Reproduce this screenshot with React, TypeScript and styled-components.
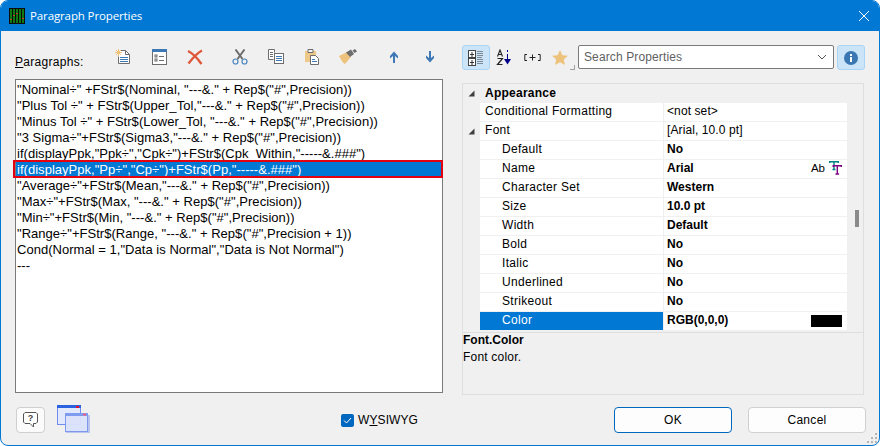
import styled, { createGlobalStyle } from "styled-components";

const GlobalStyle = createGlobalStyle`
  html, body {
    margin: 0;
    padding: 0;
    background: #fff;
  }
  body {
    font-family: "Liberation Sans", Arial, sans-serif;
    font-size: 12px;
    color: #000;
  }
`;

const Window = styled.div`
  width: 880px;
  height: 446px;
  box-sizing: border-box;
  display: flex;
  flex-direction: column;
  background: #f0f0f0;
  border: 1px solid #0078d4;
  border-radius: 8px;
  overflow: hidden;
  position: relative;
`;

const TitleBar = styled.div`
  height: 30px;
  flex: none;
  display: flex;
  align-items: center;
  padding: 0 5px 0 8px;
  gap: 5px;
  background: #0078d4;
  color: #fff;
  font-family: "Open Sans", sans-serif;
  font-size: 11.5px;
  letter-spacing: -0.12px;
`;

const Title = styled.span`
  flex: 1;
  padding-bottom: 2px;
`;

const CloseButton = styled.span`
  width: 20px;
  height: 20px;
  display: flex;
  align-items: center;
  justify-content: center;
`;

const Body = styled.div`
  flex: 1;
  display: flex;
  flex-direction: column;
  padding: 14px 13px 0 14px;
`;

const Columns = styled.div`
  display: flex;
  gap: 19px;
`;

const LeftColumn = styled.div`
  width: 428px;
  flex: none;
  display: flex;
  flex-direction: column;
`;

const RightColumn = styled.div`
  width: 403px;
  flex: none;
  display: flex;
  flex-direction: column;
`;

const ListHeader = styled.div`
  height: 34px;
  display: flex;
  align-items: flex-start;
`;

const ListLabel = styled.label`
  width: 90px;
  flex: none;
  padding-top: 10px;
  font-size: 12px;
  letter-spacing: 0.3px;
`;

const ToolIcon = styled.span<{ $gap?: number }>`
  width: 36px;
  height: 18px;
  flex: none;
  margin-left: ${(p) => p.$gap ?? 0}px;
  margin-top: 4px;
  display: flex;
  justify-content: center;
`;

const ParagraphList = styled.div`
  height: 314px;
  box-sizing: border-box;
  border: 1px solid #7a7a7a;
  background: #fff;
  padding-top: 1px;
`;

const ParagraphRow = styled.div<{ $selected?: boolean }>`
  height: 16px;
  line-height: 17px;
  padding-left: 1px;
  font-size: 13px;
  letter-spacing: 0.03px;
  white-space: pre;
  position: relative;
  overflow: ${(p) => (p.$selected ? "visible" : "hidden")};
  background: ${(p) => (p.$selected ? "#0078d4" : "transparent")};
  color: ${(p) => (p.$selected ? "#fff" : "#000")};

  ${(p) =>
    p.$selected &&
    `&::after {
      content: "";
      position: absolute;
      inset: -1px -1px -1px -3px;
      border: 2px solid #e3000f;
    }`}
`;

const SearchBar = styled.div`
  height: 25px;
  display: flex;
  align-items: flex-start;
  margin-bottom: 13px;
`;

const ToggleButton = styled.span<{ $on?: boolean }>`
  width: 28px;
  height: 25px;
  box-sizing: border-box;
  display: flex;
  align-items: center;
  justify-content: center;
  border-radius: 3px;
  border: 1px solid ${(p) => (p.$on ? "#a8d4f5" : "transparent")};
  background: ${(p) => (p.$on ? "#cce4f7" : "transparent")};
`;

const StarButton = styled(ToggleButton)`
  position: relative;

  &::after {
    content: "";
    position: absolute;
    right: -2px;
    bottom: -1px;
    width: 4px;
    height: 4px;
    border-right: 1px solid #a0a0a0;
    border-bottom: 1px solid #a0a0a0;
  }
`;

const SearchBox = styled.div`
  width: 256px;
  height: 24px;
  box-sizing: border-box;
  margin: 0 3px 0 4px;
  padding: 0 6px 1px 5px;
  display: flex;
  align-items: center;
  justify-content: space-between;
  background: #fff;
  border: 1px solid #7a7a7a;
  border-radius: 2px;
  color: #5f5f5f;
  letter-spacing: 0.12px;
`;

const PropertyGrid = styled.div`
  height: 312px;
  margin-right: 1px;
  box-sizing: border-box;
  display: flex;
  flex-direction: column;
  border: 1px solid #dedede;
  position: relative;
`;

const Rows = styled.div`
  height: 248px;
  flex: none;
  border-bottom: 1px solid #dedede;
  padding-right: 16px;
`;

const Row = styled.div<{ $category?: boolean }>`
  height: 19px;
  box-sizing: border-box;
  display: grid;
  grid-template-columns: 17px 184px 1fr;
  border-bottom: 1px solid ${(p) => (p.$category ? "transparent" : "#f0f0f0")};
`;

const Gutter = styled.span`
  display: flex;
  align-items: center;
  padding-left: 5px;
`;

const CategoryName = styled.span`
  grid-column: 2 / 4;
  padding-left: 5px;
  line-height: 18px;
  font-weight: bold;
  letter-spacing: 0.25px;
`;

const PropName = styled.span<{ $indent?: boolean; $selected?: boolean }>`
  padding-left: ${(p) => (p.$indent ? 22 : 5)}px;
  margin-right: 1px;
  line-height: 16px;
  background: ${(p) => (p.$selected ? "#0078d4" : "#fff")};
  color: ${(p) => (p.$selected ? "#fff" : "#000")};
  letter-spacing: 0.3px;
`;

const PropValue = styled.span<{ $bold?: boolean }>`
  padding: 0 5px 2px 3px;
  display: flex;
  align-items: center;
  justify-content: space-between;
  background: #fff;
  font-weight: ${(p) => (p.$bold ? "bold" : "normal")};
  letter-spacing: ${(p) => (p.$bold ? "0" : "0.1px")};
`;

const Swatch = styled.span`
  width: 31px;
  height: 12px;
  margin-top: 2px;
  background: #000;
`;

const FontBadges = styled.span`
  display: flex;
  align-items: center;
  gap: 4px;
`;

const FontSample = styled.span`
  font-weight: normal;
  font-size: 11.5px;
`;

const ScrollThumb = styled.span`
  position: absolute;
  left: 392px;
  top: 126px;
  width: 4px;
  height: 17px;
  background: #8a8a8a;
`;

const Description = styled.div`
  flex: 1;
`;

const DescriptionTitle = styled.div`
  height: 17px;
  line-height: 14px;
  font-weight: bold;
`;

const DescriptionText = styled.div`
  line-height: 14px;
  letter-spacing: 0.2px;
`;

const Footer = styled.div`
  display: flex;
  align-items: flex-start;
  padding-top: 12px;
`;

const HelpButton = styled.span`
  width: 29px;
  height: 26px;
  box-sizing: border-box;
  margin-left: 1px;
  display: flex;
  align-items: center;
  justify-content: center;
  background: #fbfbfb;
  border: 1px solid #cfcfcf;
  border-radius: 4px;
`;

const LayoutIcon = styled.span`
  width: 34px;
  height: 28px;
  margin: -2px 0 0 12px;
`;

const CheckGroup = styled.label`
  display: flex;
  align-items: center;
  gap: 4px;
  height: 26px;
  margin-left: 250px;
  letter-spacing: 0.1px;
`;

const CheckBox = styled.span`
  width: 13px;
  height: 13px;
  display: flex;
  align-items: center;
  justify-content: center;
  background: #0067c0;
  border-radius: 2px;
`;

const DialogButton = styled.button<{ $primary?: boolean }>`
  width: 118px;
  height: 26px;
  padding: 0;
  margin-left: ${(p) => (p.$primary ? "auto" : "16px")};
  background: #fdfdfd;
  border: 1px solid ${(p) => (p.$primary ? "#0067c0" : "#d0d0d0")};
  border-radius: 4px;
  font-family: "Liberation Sans", Arial, sans-serif;
  font-size: 12px;
  color: #000;
  letter-spacing: 0.3px;
`;

const ResizeGrip = styled.span`
  position: absolute;
  right: 1px;
  bottom: 1px;
  width: 11px;
  height: 11px;
`;

const paragraphs = [
  `"Nominal÷" +FStr$(Nominal, "---&." + Rep$("#",Precision))`,
  `"Plus Tol ÷" + FStr$(Upper_Tol,"---&." + Rep$("#",Precision))`,
  `"Minus Tol ÷" + FStr$(Lower_Tol, "---&." + Rep$("#",Precision))`,
  `"3 Sigma÷"+FStr$(Sigma3,"---&." + Rep$("#",Precision))`,
  `if(displayPpk,"Ppk÷","Cpk÷")+FStr$(Cpk_Within,"-----&.###")`,
  `if(displayPpk,"Pp÷","Cp÷")+FStr$(Pp,"-----&.###")`,
  `"Average÷"+FStr$(Mean,"---&." + Rep$("#",Precision))`,
  `"Max÷"+FStr$(Max, "---&." + Rep$("#",Precision))`,
  `"Min÷"+FStr$(Min, "---&." + Rep$("#",Precision))`,
  `"Range÷"+FStr$(Range, "---&." + Rep$("#",Precision + 1))`,
  `Cond(Normal = 1,"Data is Normal","Data is Not Normal")`,
  `---`,
];

const fontProps = [
  ["Default", "No"],
  ["Name", "Arial"],
  ["Character Set", "Western"],
  ["Size", "10.0 pt"],
  ["Width", "Default"],
  ["Bold", "No"],
  ["Italic", "No"],
  ["Underlined", "No"],
  ["Strikeout", "No"],
];

function Triangle() {
  return (
    <svg width="7" height="7" viewBox="0 0 7 7">
      <path d="M6.5 0.5V6.5H0.5Z" fill="#404040" />
    </svg>
  );
}

function AppIcon() {
  return (
    <svg width="16" height="16" viewBox="0 0 16 16">
      <rect width="16" height="16" fill="#0b0b0b" />
      <path d="M1 1h2v14H1zM4 1h2v14H4zM7 1h2v14H7zM10 1h2v14h-2zM13 1h2v14h-2z" fill="#0c7a12" />
      <path d="M4 7h2v1H4zM7 5h2v1H7zM1 11h2v1H1zM13 10h2v1h-2z" fill="#c8401c" />
    </svg>
  );
}

function NewIcon() {
  return (
    <svg width="16" height="16" viewBox="0 0 16 16">
      <path d="M5.5 1.5h5l4 4v9h-11v-7" fill="#fff" stroke="#6d6d6d" />
      <path d="M10.5 1.5v4h4" fill="none" stroke="#6d6d6d" />
      <path d="M5 8h8v1H5zM5 10h8v1H5zM5 12h8v1H5z" fill="#3d78b4" />
      <path d="M3.5 0v7M0 3.5h7M1 1l5 5M6 1l-5 5" stroke="#eec27a" strokeWidth="1" />
    </svg>
  );
}

function FormIcon() {
  return (
    <svg width="15" height="16" viewBox="0 0 15 16">
      <rect x="0.5" y="0.5" width="14" height="15" fill="#fff" stroke="#6d6d6d" />
      <rect x="0" y="0" width="15" height="3" fill="#3d78b4" />
      <rect x="3" y="6" width="2" height="2" fill="none" stroke="#6d6d6d" />
      <rect x="3" y="10" width="2" height="2" fill="none" stroke="#6d6d6d" />
      <path d="M7 7h5v1H7zM7 11h5v1H7z" fill="#6d6d6d" />
    </svg>
  );
}

function DeleteIcon() {
  return (
    <svg width="16" height="16" viewBox="0 0 16 16">
      <path d="M1 2C5 4 11 10 14.5 15M15 1.5C10 4 5 10 1.5 14.5" fill="none" stroke="#e0583a" strokeWidth="2.4" />
    </svg>
  );
}

function CutIcon() {
  return (
    <svg width="16" height="16" viewBox="0 0 16 16">
      <path d="M3.5 0.5L10.5 10M12.5 0.5L5.5 10" fill="none" stroke="#6d6d6d" strokeWidth="2" />
      <circle cx="3.5" cy="12.5" r="2.5" fill="none" stroke="#4a84c0" strokeWidth="1.2" />
      <circle cx="12.5" cy="12.5" r="2.5" fill="none" stroke="#4a84c0" strokeWidth="1.2" />
    </svg>
  );
}

function CopyIcon() {
  return (
    <svg width="16" height="15" viewBox="0 0 16 15">
      <path d="M5.5 10.5h-5v-10h6v3" fill="#fff" stroke="#6d6d6d" />
      <path d="M2 3h3v1H2zM2 5h3v1H2zM2 7h3v1H2z" fill="#6d6d6d" />
      <rect x="6.5" y="4.5" width="9" height="10" fill="#fff" stroke="#6d6d6d" />
      <path d="M8 7h6v1H8zM8 9h6v1H8zM8 11h6v1H8z" fill="#3d78b4" />
    </svg>
  );
}

function PasteIcon() {
  return (
    <svg width="14" height="16" viewBox="0 0 14 16">
      <path d="M0 2h11v11H0z" fill="#edc888" />
      <path d="M3 0.5h5v3H3z" fill="#f5f5f5" stroke="#6d6d6d" />
      <path d="M5.5 6.5h5l3 3v6h-8z" fill="#fff" stroke="#6d6d6d" />
      <path d="M7 10h3v1H7zM7 12h5v1H7z" fill="#3d78b4" />
    </svg>
  );
}

function BrushIcon() {
  return (
    <svg width="18" height="15" viewBox="0 0 18 15">
      <path d="M0 7L8 3L12 8L6 15C4 14 2 11 0 7Z" fill="#edc27c" />
      <path d="M7 3.5L12 0.5L15 5L11 8Z" fill="#6d6d6d" />
      <path d="M13.5 1.5L16 0L18 2.5L15.5 4Z" fill="#6d6d6d" />
    </svg>
  );
}

function ArrowIcon({ down }: { down?: boolean }) {
  return (
    <svg width="10" height="12" viewBox="0 0 10 12" style={{ marginTop: 2 }}>
      <path
        d={down ? "M4 0h2v7l3-2.5V7l-4 4.5L1 7V4.5L4 7Z" : "M4 12h2V5l3 2.5V5L5 .5 1 5v2.5L4 5Z"}
        fill="#3f79b5"
      />
    </svg>
  );
}

function CategorizedIcon() {
  return (
    <svg width="16" height="16" viewBox="0 0 16 16">
      <rect x="0.5" y="0.5" width="7" height="7" fill="#fff" stroke="#444" />
      <rect x="0.5" y="8.5" width="7" height="7" fill="#fff" stroke="#444" />
      <path d="M2 4h4v1H2zM3.500 2h1v5h-1zM2 12h4v1H2zM3.500 10h1v5h-1z" fill="#333" />
      <path d="M9 1h6v1H9zM9 3h6v1H9zM9 5h6v1H9zM9 7h5v1H9zM9 9h6v1H9zM9 11h6v1H9zM9 13h6v1H9z" fill="#7d8a96" />
    </svg>
  );
}

function SortIcon() {
  return (
    <svg width="16" height="17" viewBox="0 0 16 17">
      <path d="M1.500 7.500L4 1l2.500 6.500M2.500 5.500h3" fill="none" stroke="#222" strokeWidth="1.1" />
      <path d="M1.500 9.500h5l-5 6h5" fill="none" stroke="#222" strokeWidth="1.2" />
      <path d="M11.500 1v2M11.500 5v6" stroke="#00008b" strokeWidth="1" />
      <path d="M8 10h7l-3.500 5.500Z" fill="#00008b" />
    </svg>
  );
}

function ExpandIcon() {
  return (
    <svg width="17" height="7" viewBox="0 0 17 7">
      <path d="M3 .5H.8v6H3M14 .5h2.200v6H14" fill="none" stroke="#222" />
      <path d="M8.500 .5v6M5.500 3.500h6" stroke="#222" />
    </svg>
  );
}

function StarIcon() {
  return (
    <svg width="16" height="15" viewBox="0 0 16 15">
      <path d="M8 0l2.400 5.200 5.600.6-4.200 3.800 1.200 5.400L8 12.200 3 15l1.200-5.400L0 5.800l5.600-.6Z" fill="#edc27c" />
    </svg>
  );
}

function ChevronIcon() {
  return (
    <svg width="10" height="6" viewBox="0 0 10 6">
      <path d="M1 1l4 4 4-4" fill="none" stroke="#555" />
    </svg>
  );
}

function InfoIcon() {
  return (
    <svg width="14" height="14" viewBox="0 0 14 14">
      <circle cx="7" cy="7" r="7" fill="#3a77b3" />
      <rect x="6" y="3" width="2" height="2" fill="#fff" />
      <rect x="6" y="6" width="2" height="5" fill="#fff" />
    </svg>
  );
}

function FontStyleIcon() {
  return (
    <svg width="13" height="14" viewBox="0 0 13 14">
      <path d="M.7 2V.7h8.600V2M5 .7v8M3.500 8.500h3" fill="none" stroke="#008080" strokeWidth="1.4" />
      <path d="M4.200 6V4.700h8.100V6M8.300 4.700v8.300M6.500 13h3.600" fill="none" stroke="#800080" strokeWidth="1.4" />
    </svg>
  );
}

function HelpIcon() {
  return (
    <svg width="15" height="16" viewBox="0 0 15 16">
      <path d="M2 .5h11l1.500 1.500v8L13 11.500h-2.500V15L7 11.500H2L.5 10V2Z" fill="#fff" stroke="#555" />
      <text x="7.500" y="9" textAnchor="middle" fontSize="9" fontWeight="bold" fontFamily="Liberation Sans" fill="#444">
        ?
      </text>
    </svg>
  );
}

function WindowsIcon() {
  return (
    <svg width="34" height="28" viewBox="0 0 34 28">
      <rect x="0.500" y="0.500" width="23" height="19" fill="#e3e9fc" stroke="#6f8cec" />
      <rect x="0" y="0" width="24" height="3" fill="#2a62e0" />
      <rect x="19" y="1" width="3" height="2" fill="#e0103a" />
      <rect x="9" y="10" width="24" height="18" fill="#8ba2ee" opacity="0.55" />
      <rect x="8.500" y="8.500" width="22" height="18" fill="#dfe6fb" fillOpacity="0.9" stroke="#7f98ee" />
      <rect x="8" y="8" width="23" height="3" fill="#7d9cf0" />
      <rect x="26" y="8.500" width="3" height="2" fill="#f06080" />
    </svg>
  );
}

function GripIcon() {
  return (
    <svg width="11" height="11" viewBox="0 0 11 11">
      <path d="M8 0h2v2H8zM4 4h2v2H4zM8 4h2v2H8zM0 8h2v2H0zM4 8h2v2H4zM8 8h2v2H8z" fill="#b5b5b5" />
    </svg>
  );
}

export default function App() {
  return (
    <>
      <GlobalStyle />
      <Window>
        <TitleBar>
          <AppIcon />
          <Title>Paragraph Properties</Title>
          <CloseButton>
            <svg width="10" height="10" viewBox="0 0 10 10">
              <path d="M0 0l10 10M10 0L0 10" stroke="#fff" strokeWidth="1" />
            </svg>
          </CloseButton>
        </TitleBar>
        <Body>
          <Columns>
            <LeftColumn>
              <ListHeader>
                <ListLabel>
                  <u>P</u>aragraphs:
                </ListLabel>
                <ToolIcon><NewIcon /></ToolIcon>
                <ToolIcon><FormIcon /></ToolIcon>
                <ToolIcon><DeleteIcon /></ToolIcon>
                <ToolIcon $gap={9}><CutIcon /></ToolIcon>
                <ToolIcon><CopyIcon /></ToolIcon>
                <ToolIcon><PasteIcon /></ToolIcon>
                <ToolIcon><BrushIcon /></ToolIcon>
                <ToolIcon $gap={10}><ArrowIcon /></ToolIcon>
                <ToolIcon><ArrowIcon down /></ToolIcon>
              </ListHeader>
              <ParagraphList>
                {paragraphs.map((text, i) => (
                  <ParagraphRow key={i} $selected={i === 5}>
                    {text}
                  </ParagraphRow>
                ))}
              </ParagraphList>
            </LeftColumn>
            <RightColumn>
              <SearchBar>
                <ToggleButton $on><CategorizedIcon /></ToggleButton>
                <ToggleButton><SortIcon /></ToggleButton>
                <ToggleButton><ExpandIcon /></ToggleButton>
                <StarButton><StarIcon /></StarButton>
                <SearchBox>
                  Search Properties
                  <ChevronIcon />
                </SearchBox>
                <ToggleButton $on><InfoIcon /></ToggleButton>
              </SearchBar>
              <PropertyGrid>
                <Rows>
                  <Row $category>
                    <Gutter><Triangle /></Gutter>
                    <CategoryName>Appearance</CategoryName>
                  </Row>
                  <Row>
                    <Gutter />
                    <PropName>Conditional Formatting</PropName>
                    <PropValue>&lt;not set&gt;</PropValue>
                  </Row>
                  <Row>
                    <Gutter><Triangle /></Gutter>
                    <PropName>Font</PropName>
                    <PropValue>[Arial, 10.0 pt]</PropValue>
                  </Row>
                  {fontProps.map(([name, value]) => (
                    <Row key={name}>
                      <Gutter />
                      <PropName $indent>{name}</PropName>
                      <PropValue $bold>
                        {value}
                        {name === "Name" && (
                          <FontBadges>
                            <FontSample>Ab</FontSample>
                            <FontStyleIcon />
                          </FontBadges>
                        )}
                      </PropValue>
                    </Row>
                  ))}
                  <Row>
                    <Gutter />
                    <PropName $indent $selected>Color</PropName>
                    <PropValue $bold>
                      RGB(0,0,0)
                      <Swatch />
                    </PropValue>
                  </Row>
                </Rows>
                <ScrollThumb />
                <Description>
                  <DescriptionTitle>Font.Color</DescriptionTitle>
                  <DescriptionText>Font color.</DescriptionText>
                </Description>
              </PropertyGrid>
            </RightColumn>
          </Columns>
          <Footer>
            <HelpButton><HelpIcon /></HelpButton>
            <LayoutIcon><WindowsIcon /></LayoutIcon>
            <CheckGroup>
              <CheckBox>
                <svg width="9" height="7" viewBox="0 0 9 7">
                  <path d="M1 3.500l2.500 2.500L8 1" fill="none" stroke="#fff" />
                </svg>
              </CheckBox>
              <span>
                W<u>Y</u>SIWYG
              </span>
            </CheckGroup>
            <DialogButton $primary>OK</DialogButton>
            <DialogButton>Cancel</DialogButton>
          </Footer>
        </Body>
        <ResizeGrip><GripIcon /></ResizeGrip>
      </Window>
    </>
  );
}
